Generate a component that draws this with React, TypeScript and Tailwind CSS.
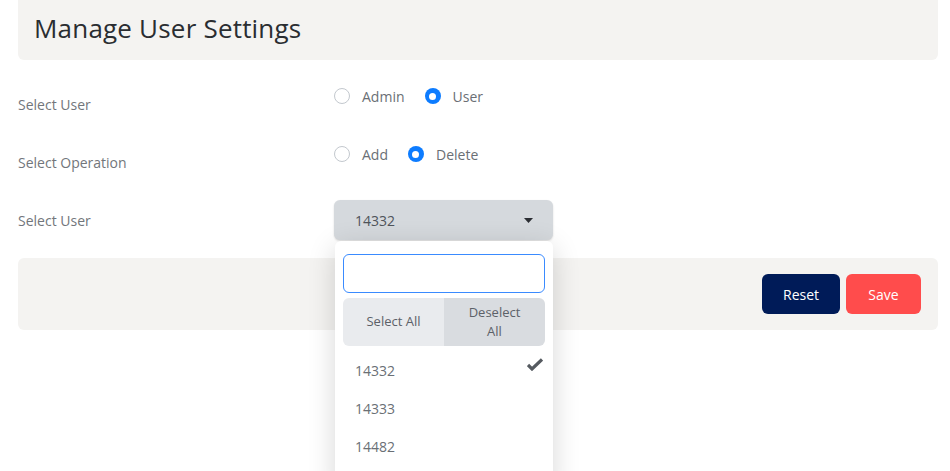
import React from "react";

const poppins = { fontFamily: '"Open Sans", "Noto Sans", sans-serif' };

function Radio({ label, checked }: { label: string; checked?: boolean }) {
  return (
    <div className="flex items-center h-5">
      {checked ? (
        <span className="w-4 h-4 rounded-full bg-[#0d7cff] flex items-center justify-center">
          <span className="w-[7px] h-[7px] rounded-full bg-white" />
        </span>
      ) : (
        <span className="w-4 h-4 rounded-full border border-[#c3c8ce] bg-white" />
      )}
      <span className="ml-3 text-[14px] text-[#6a6f75]" style={poppins}>
        {label}
      </span>
    </div>
  );
}

export default function App() {
  return (
    <div className="w-[950px] h-[471px] bg-white overflow-hidden relative" style={{ fontFamily: '"Open Sans", sans-serif' }}>
      <div className="px-[18px]">
        <div className="w-[920px] h-[60px] bg-[#f4f3f1] rounded-b-md flex items-center pl-4 pb-1">
          <h1 className="text-[26px] font-normal text-[#2a2d31] tracking-[0.2px]" style={poppins}>
            Manage User Settings
          </h1>
        </div>

        <div className="flex h-[58px] mt-5">
          <div className="w-[316px] pt-[15px] text-[14px] leading-5 text-[#72767b]">Select User</div>
          <div className="pt-[6px] flex gap-5">
            <Radio label="Admin" />
            <Radio label="User" checked />
          </div>
        </div>

        <div className="flex h-[58px]">
          <div className="w-[316px] pt-[15px] text-[14px] leading-5 text-[#72767b]">Select Operation</div>
          <div className="pt-[6px] flex gap-5">
            <Radio label="Add" />
            <Radio label="Delete" checked />
          </div>
        </div>

        <div className="flex h-[62px]">
          <div className="w-[316px] pt-[15px] text-[14px] leading-5 text-[#72767b]">Select User</div>
          <div className="pt-1 relative">
            <div className="w-[219px] h-10 bg-[#d5d9dd] rounded-md shadow-[0_1px_2px_rgba(0,0,0,0.15)] flex items-center justify-between pl-[21px] pr-5">
              <span className="text-[14px] text-[#4f545a]" style={poppins}>14332</span>
              <svg width="9" height="5" viewBox="0 0 9 5"><path d="M0 0h9L4.5 5z" fill="#2b2e33" /></svg>
            </div>
          </div>
        </div>

        <div className="w-[920px] h-[72px] bg-[#f4f3f1] rounded-md flex items-center justify-end pr-[17px] gap-[6px]">
          <button className="w-[78px] h-10 rounded-md bg-[#001b58] text-white text-[14px]" style={poppins}>Reset</button>
          <button className="w-[75px] h-10 rounded-md bg-[#ff4c4c] text-white text-[14px]" style={poppins}>Save</button>
        </div>
      </div>

      <div className="absolute left-[335px] top-[241px] w-[218px] h-[250px] bg-white rounded-md shadow-[0_6px_28px_rgba(0,0,0,0.16)] px-2 pt-[13px]">
        <div className="h-[39px] border border-[#3a8bff] rounded-md bg-white" />
        <div className="mt-[5px] flex h-12 rounded-md overflow-hidden text-[13px] text-[#5c6168]" style={poppins}>
          <div className="w-[101px] bg-[#e9ebee] flex items-center justify-center">Select All</div>
          <div className="w-[101px] bg-[#d9dce0] flex items-center justify-center text-center leading-[19px] px-4">Deselect All</div>
        </div>
        <div className="mt-[5px]" style={poppins}>
          <div className="h-[38px] flex items-center justify-between pl-3 pr-[2px] text-[14px] text-[#6a6f75]">
            <span>14332</span>
            <svg width="16" height="13" viewBox="0 0 16 13" className="-mt-3">
              <path d="M1 7l4 4L15 1.5" fill="none" stroke="#555a60" strokeWidth="3.2" strokeLinejoin="miter" />
            </svg>
          </div>
          <div className="h-[38px] flex items-center pl-3 text-[14px] text-[#6a6f75]">14333</div>
          <div className="h-[38px] flex items-center pl-3 text-[14px] text-[#6a6f75]">14482</div>
        </div>
      </div>
    </div>
  );
}
